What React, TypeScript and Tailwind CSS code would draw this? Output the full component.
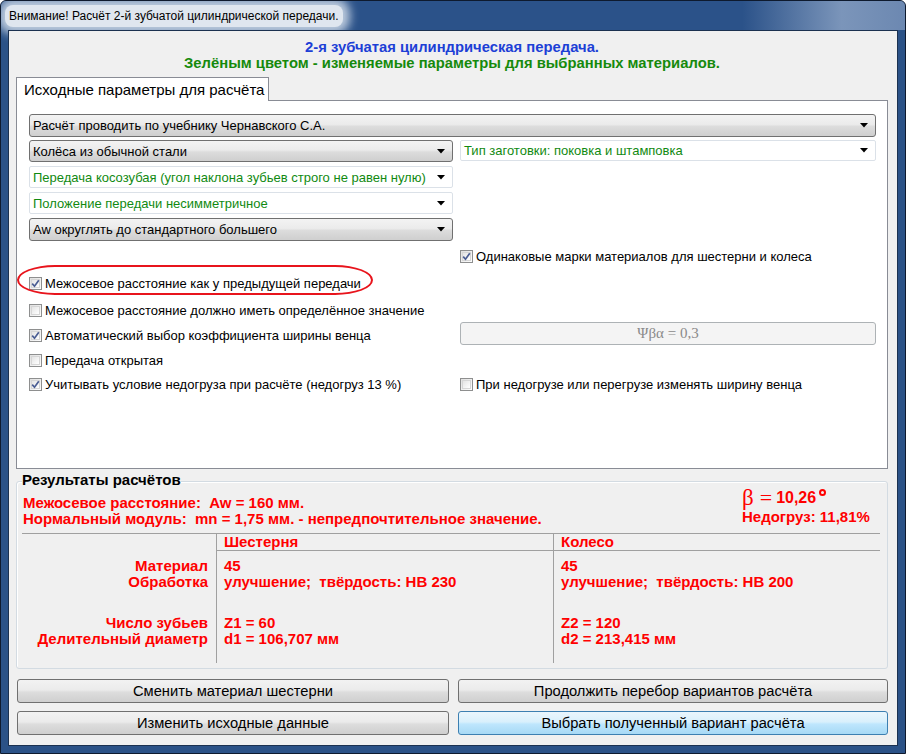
import React from "react";

const sans = "font-['Liberation_Sans',Arial,sans-serif]";

function Arrow() {
  return (
    <svg width="8" height="5" viewBox="0 0 8 5" className="shrink-0">
      <path d="M0 0H8L4 4.5Z" fill="#000" />
    </svg>
  );
}

function Combo({ text, kind = "gray", className = "" }: { text: string; kind?: "gray" | "white"; className?: string }) {
  const look =
    kind === "gray"
      ? "border-[#707070] rounded-[3px] bg-[linear-gradient(180deg,#f3f3f3_0%,#ebebeb_45%,#dcdcdc_55%,#cfcfcf_100%)] text-black"
      : "border-[#dbe1e8] rounded-[2px] bg-white text-[#118a11]";
  return (
    <div className={`flex items-center justify-between border pl-[3px] pr-[7px] text-[13px] leading-none ${look} ${className}`}>
      <span>{text}</span>
      <Arrow />
    </div>
  );
}

function Check({ checked = false, label }: { checked?: boolean; label: string }) {
  return (
    <div className="flex items-center gap-[3px] text-[13px] leading-none text-black">
      <span className="relative flex h-[13px] w-[13px] shrink-0 items-center justify-center border border-[#8e8f8f] bg-[linear-gradient(135deg,#e0e0e0,#fdfdfd)]">
        <span className="absolute inset-[1px] border border-[#d6d6d6] bg-[linear-gradient(135deg,#e4e4e4,#ffffff)]" />
        {checked && (
          <svg width="9" height="9" viewBox="0 0 9 9" className="relative">
            <path d="M1.2 4.6L3.5 7.2L7.8 1.2" stroke="#4a5d93" strokeWidth="1.7" fill="none" />
          </svg>
        )}
      </span>
      <span>{label}</span>
    </div>
  );
}

function WinButton({ text, focused = false }: { text: string; focused?: boolean }) {
  const look = focused
    ? "border-[#3c7fb1] bg-[linear-gradient(180deg,#eaf6fd_0%,#d9f0fc_45%,#bee6fd_55%,#a7d9f5_100%)]"
    : "border-[#707070] bg-[linear-gradient(180deg,#f2f2f2_0%,#ebebeb_45%,#dddddd_55%,#cfcfcf_100%)]";
  return (
    <div className={`flex h-[24px] items-center justify-center rounded-[3px] border text-[14.7px] leading-none text-black ${look}`}>
      {text}
    </div>
  );
}

export default function App() {
  return (
    <div className={`flex h-[754px] w-[906px] flex-col overflow-hidden rounded-t-[6px] border border-[#0e1a2e] bg-[#2b5287] ${sans}`}>
      {/* title bar */}
      <div className="flex h-[29px] shrink-0 items-center bg-[linear-gradient(90deg,#2b5289_0%,#2b5289_82%,#7b95ba_93%,#6c88b1_100%)] pl-[4px]">
        <span className="rounded-[8px] bg-[#dfe6ef] px-[4px] py-[2px] text-[12px] leading-[18px] text-black shadow-[0_0_10px_7px_rgba(214,224,236,0.85)]">
          Внимание! Расчёт 2-й зубчатой цилиндрической передачи.
        </span>
      </div>

      {/* client area */}
      <div className="mx-[7px] mb-[7px] flex flex-1 flex-col border border-[#1b3150] bg-[#f0f0f0] pl-[7px] pr-[9px]">
        <div className="pt-[8px] text-center text-[14.8px] font-bold leading-[16px]">
          <div className="text-[#1d3fd6]">2-я зубчатая цилиндрическая передача.</div>
          <div className="text-[#168a0c]">Зелёным цветом - изменяемые параметры для выбранных материалов.</div>
        </div>

        {/* tab */}
        <div className="relative z-10 mt-[6px] -mb-px flex h-[24px] w-[253px] items-center border border-b-0 border-[#898c95] bg-white pl-[7px] text-[15px] leading-none text-black">
          Исходные параметры для расчёта
        </div>
        <div className="flex h-[369px] flex-col border border-[#898c95] bg-white pl-[12px] pr-[11px] pt-[13px]">
          <Combo text="Расчёт проводить по учебнику Чернавского С.А." className="h-[23px]" />
          <div className="mt-[3px] flex gap-[7px]">
            <div className="flex w-[424px] flex-col gap-[4px]">
              <Combo text="Колёса из обычной стали" className="h-[22px]" />
              <Combo kind="white" text="Передача косозубая (угол наклона зубьев строго не равен нулю)" className="h-[22px]" />
              <Combo kind="white" text="Положение передачи несимметричное" className="h-[22px]" />
              <Combo text="Aw округлять до стандартного большего" className="h-[23px]" />
            </div>
            <div className="w-[416px]">
              <Combo kind="white" text="Тип заготовки: поковка и штамповка" className="h-[21px]" />
            </div>
          </div>

          <div className="mt-[2px] flex h-[26px] items-center gap-[7px]">
            <div className="w-[424px]" />
            <Check checked label="Одинаковые марки материалов для шестерни и колеса" />
          </div>
          <div className="relative flex h-[28px] items-center">
            <Check checked label="Межосевое расстояние как у предыдущей передачи" />
            <div className="pointer-events-none absolute left-[-12px] top-[-4px] h-[30px] w-[356px] rounded-[38px/15px] border-2 border-[#e8141c]" />
          </div>
          <div className="flex h-[26px] items-center">
            <Check label="Межосевое расстояние должно иметь определённое значение" />
          </div>
          <div className="flex h-[25px] items-center gap-[7px]">
            <div className="w-[424px]">
              <Check checked label="Автоматический выбор коэффициента ширины венца" />
            </div>
            <div className="-mt-[5px] flex h-[23px] w-[416px] items-center justify-center rounded-[3px] border border-[#adb2b5] bg-[#f4f4f4] font-['Liberation_Serif',serif] text-[15px] leading-none text-[#8a8a8a]">
              Ψβα = 0,3
            </div>
          </div>
          <div className="flex h-[24px] items-center">
            <Check label="Передача открытая" />
          </div>
          <div className="flex h-[24px] items-center gap-[7px]">
            <div className="w-[424px]">
              <Check checked label="Учитывать условие недогруза при расчёте (недогруз 13 %)" />
            </div>
            <Check label="При недогрузе или перегрузе изменять ширину венца" />
          </div>
        </div>

        {/* results */}
        <div className="mt-[12px] flex h-[188px] flex-col rounded-[3px] border border-[#d3dbe2] shadow-[inset_1px_1px_0_#ffffff]">
          <div className="-mt-[10px] ml-[5px] w-fit bg-[#f0f0f0] text-[15px] font-bold leading-[16px] text-black">Результаты расчётов</div>
          <div className="mt-[7px] flex text-[15px] font-bold leading-[16px] text-[#ff0000]">
            <div className="pl-[6px]">
              <div>Межосевое расстояние:&nbsp; Aw = 160 мм.</div>
              <div>Нормальный модуль:&nbsp; mn = 1,75 мм. - непредпочтительное значение.</div>
            </div>
            <div className="ml-auto mr-[5px] -mt-[10px] w-[140px]">
              <div className="flex h-[24px] items-end pb-[1px]">
                <span className="font-['Liberation_Serif',serif] text-[23px] font-normal leading-[20px]">β</span>
                <span className="ml-[6px] font-['Liberation_Serif',serif] text-[22px] font-normal leading-[20px]">=</span>
                <span className="ml-[4px] pb-[1px] text-[16px] leading-[18px]">10,26</span>
                <span className="mb-[12px] ml-[3px] inline-block h-[7px] w-[7px] rounded-full border-2 border-[#ff0000]" />
              </div>
              <div>Недогруз: 11,81%</div>
            </div>
          </div>

          <div className="ml-[5px] mr-[7px] mt-[6px] flex border-t border-[#a0a0a0] text-[15px] font-bold leading-[16px] text-[#ff0000]">
            <div className="w-[194px] pr-[8px] text-right">
              <div className="h-[17px]" />
              <div className="pt-[7px]">
                <div>Материал</div>
                <div>Обработка</div>
                <div className="mt-[25px]">Число зубьев</div>
                <div>Делительный диаметр</div>
              </div>
            </div>
            <div className="w-[337px] border-l border-[#a0a0a0]">
              <div className="h-[17px] border-b border-[#a0a0a0] pl-[7px]">Шестерня</div>
              <div className="h-[112px] pl-[7px] pt-[7px]">
                <div>45</div>
                <div>улучшение;&nbsp; твёрдость: НВ 230</div>
                <div className="mt-[25px]">Z1 = 60</div>
                <div>d1 = 106,707 мм</div>
              </div>
            </div>
            <div className="flex-1 border-l border-[#a0a0a0]">
              <div className="h-[17px] border-b border-[#a0a0a0] pl-[7px]">Колесо</div>
              <div className="pl-[7px] pt-[7px]">
                <div>45</div>
                <div>улучшение;&nbsp; твёрдость: НВ 200</div>
                <div className="mt-[25px]">Z2 = 120</div>
                <div>d2 = 213,415 мм</div>
              </div>
            </div>
          </div>
        </div>

        {/* buttons */}
        <div className="ml-[1px] mt-[10px] grid grid-cols-[432px_430px] gap-x-[9px] gap-y-[8px]">
          <WinButton text="Сменить материал шестерни" />
          <WinButton text="Продолжить перебор вариантов расчёта" />
          <WinButton text="Изменить исходные данные" />
          <WinButton text="Выбрать полученный вариант расчёта" focused />
        </div>
      </div>
    </div>
  );
}
